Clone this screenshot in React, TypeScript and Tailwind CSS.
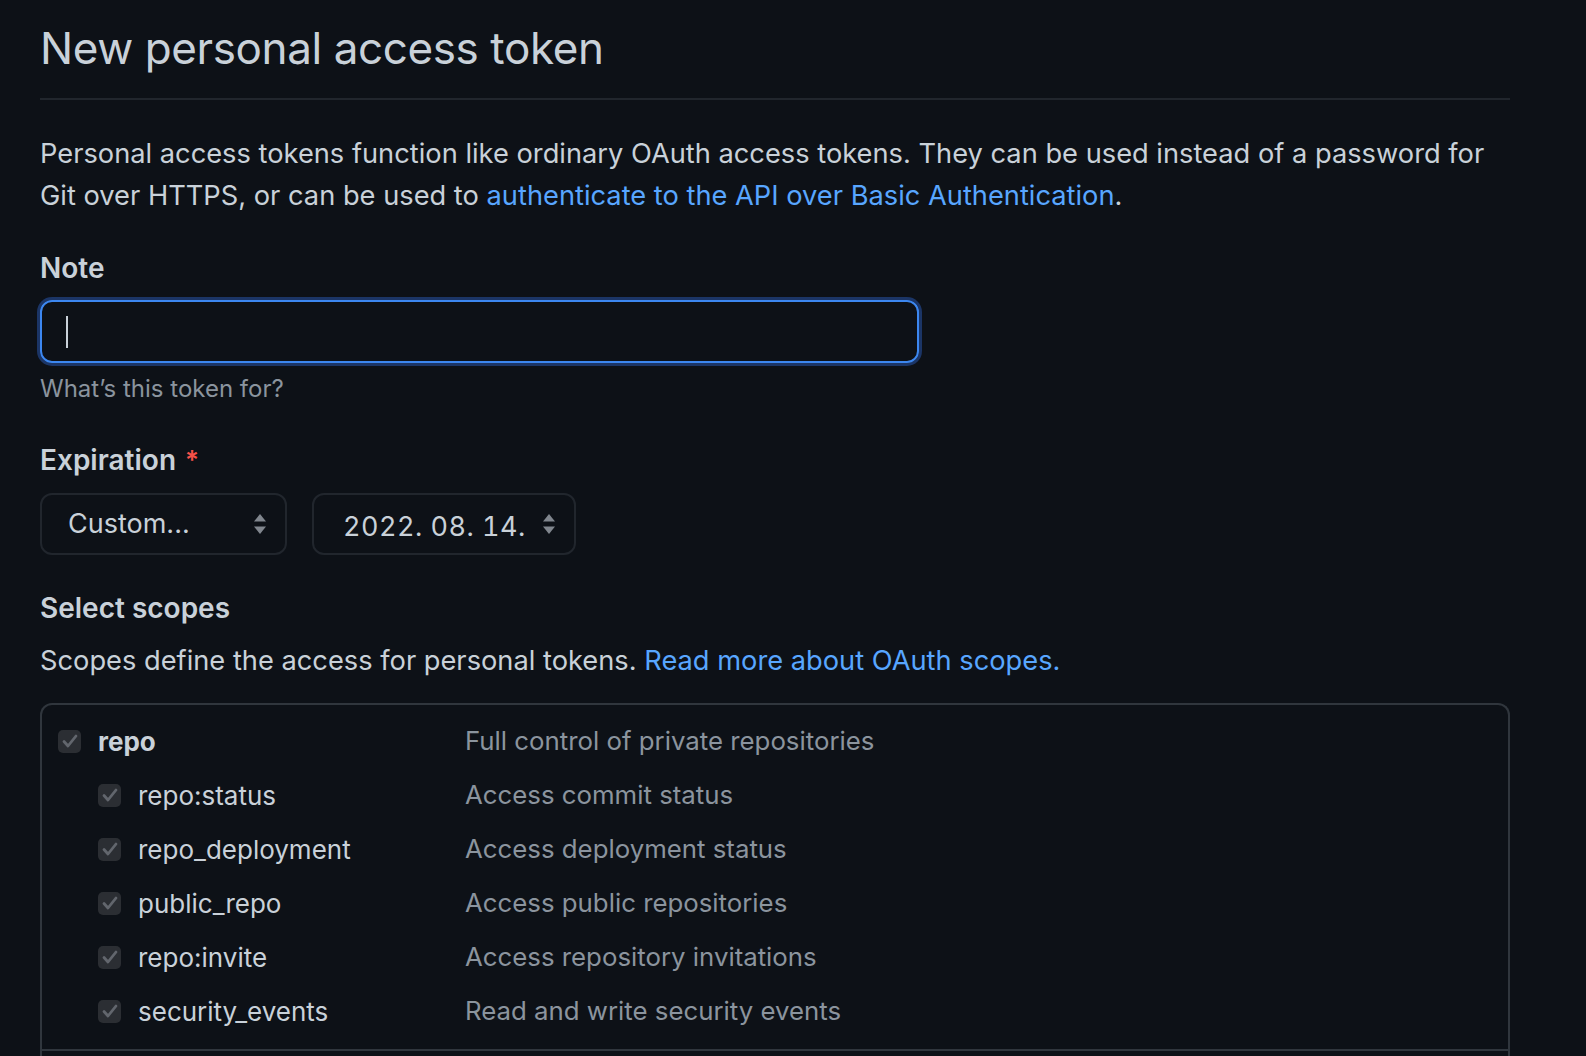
import { ReactNode } from 'react';

type Scope = { name: string; desc: string; sub?: boolean; bold?: boolean };

const scopes: Scope[] = [
  { name: 'repo', desc: 'Full control of private repositories', bold: true },
  { name: 'repo:status', desc: 'Access commit status', sub: true },
  { name: 'repo_deployment', desc: 'Access deployment status', sub: true },
  { name: 'public_repo', desc: 'Access public repositories', sub: true },
  { name: 'repo:invite', desc: 'Access repository invitations', sub: true },
  { name: 'security_events', desc: 'Read and write security events', sub: true },
];

function Arrows() {
  return (
    <svg width="14" height="22" viewBox="0 0 14 22" className="shrink-0">
      <path d="M7 1 L13 8.5 L1 8.5 Z" fill="#80868e" />
      <path d="M1 13.5 L13 13.5 L7 21 Z" fill="#80868e" />
    </svg>
  );
}

function Checkbox() {
  return (
    <span className="flex h-[23px] w-[23px] shrink-0 items-center justify-center rounded-[5px] bg-[#2b2e33]">
      <svg width="16" height="14" viewBox="0 0 16 14">
        <path d="M2 7.5 L6 12 L14 2" fill="none" stroke="#62666d" strokeWidth="2.8" strokeLinecap="round" strokeLinejoin="round" />
      </svg>
    </span>
  );
}

function Label({ children }: { children: ReactNode }) {
  return <div className="text-[28px] font-semibold leading-[42px] text-[#c9d1d9]">{children}</div>;
}

export default function App() {
  return (
    <div
      className="min-h-screen bg-[#0d1117] text-[#c9d1d9]"
      style={{ fontFamily: 'Inter, "Noto Sans", sans-serif' }}
    >
      <div className="w-[1510px] pl-[40px] pt-[20px]">
        <div className="border-b-2 border-[#21262d] pb-[22px]">
          <h2 className="text-[44px] font-normal leading-[56px] tracking-[-0.4px] text-[#c9d1d9]">
            New personal access token
          </h2>
        </div>

        <p className="mt-[33px] text-[27.25px] leading-[42px]">
          Personal access tokens function like ordinary OAuth access tokens. They can be used instead of a password for
          Git over HTTPS, or can be used to{' '}
          <a className="text-[#58a6ff]">authenticate to the API over Basic Authentication</a>.
        </p>

        <div className="mt-[30px]">
          <Label>Note</Label>
        </div>
        <div className="mt-[11px] flex h-[63px] w-[879px] items-center rounded-[12px] border-2 border-[#3c87f0] px-[24px] shadow-[0_0_0_3px_#1b3566]">
          <span className="h-[32px] w-[2px] bg-[#c9d1d9]" />
        </div>
        <p className="mt-[8px] text-[24px] leading-[36px] text-[#8b949e]">What’s this token for?</p>

        <div className="mt-[32px] flex items-center">
          <Label>Expiration</Label>
          <span className="ml-[9px] text-[26px] font-semibold leading-[42px] text-[#f85149]">*</span>
        </div>
        <div className="mt-[12px] flex gap-[25px]">
          <div className="flex h-[62px] w-[247px] items-center justify-between rounded-[12px] border-2 border-[#21262d] pl-[26px] pr-[18px]">
            <span className="text-[27px]">Custom...</span>
            <Arrows />
          </div>
          <div className="flex h-[62px] w-[264px] items-center justify-between rounded-[12px] border-2 border-[#21262d] pl-[29px] pr-[18px]">
            <span className="whitespace-nowrap pt-[6px] text-[27px] tracking-[0.5px] [font-variant-numeric:tabular-nums]">
              2022. 08. 14.
            </span>
            <Arrows />
          </div>
        </div>

        <div className="mt-[32px]">
          <Label>Select scopes</Label>
        </div>
        <p className="mt-[11px] text-[27.25px] leading-[42px]">
          Scopes define the access for personal tokens. <a className="text-[#58a6ff]">Read more about OAuth scopes.</a>
        </p>

        <div className="mt-[21px] rounded-t-[12px] border-2 border-b-0 border-[#30363d] pt-[9px]">
          {scopes.map((s) => (
            <div key={s.name} className="flex h-[54px] items-center">
              <div className={`flex w-[423px] items-center ${s.sub ? 'pl-[56px]' : 'pl-[16px]'}`}>
                <Checkbox />
                <span
                  className={`ml-[17px] text-[26px] ${s.bold ? 'font-bold' : 'font-normal'} text-[#c9d1d9]`}
                >
                  {s.name}
                </span>
              </div>
              <span className="text-[25.8px] text-[#8b949e]">{s.desc}</span>
            </div>
          ))}
          <div className="mt-[11px] h-[54px] border-t-2 border-[#30363d]" />
        </div>
      </div>
    </div>
  );
}
